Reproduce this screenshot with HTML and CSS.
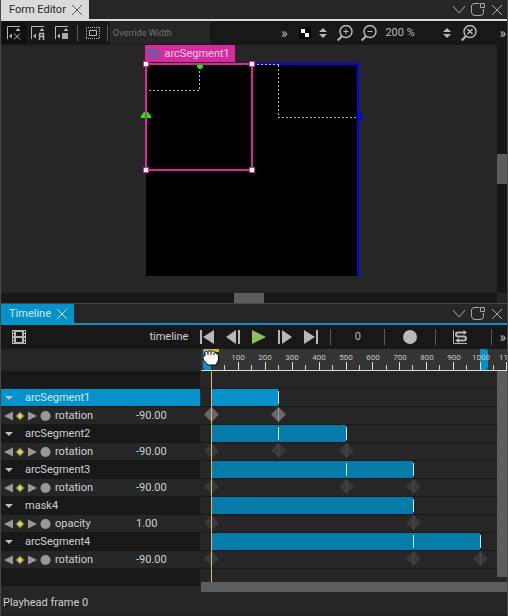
FILE: index.html
```html
<!DOCTYPE html>
<html lang="en">
<head>
<meta charset="utf-8">
<title>Form Editor and Timeline</title>
<link rel="stylesheet" href="styles.css">
</head>
<body>
<svg class="defs" aria-hidden="true">
  <defs>
    <g id="close"><path d="M1 1 11 11M11 1 1 11" fill="none" stroke="currentColor"/></g>
    <g id="chevron"><path d="M1 1 7 8 13 1" fill="none" stroke="currentColor"/></g>
    <g id="float"><path d="M8.500 1.500H4Q.5 1.500 .5 4V10Q.5 13.500 4 13.500H9Q12.500 13.500 12.500 10V7M9.500 1.500h4v4h-4z" fill="none" stroke="currentColor"/></g>
    <g id="spin" fill="currentColor"><path d="M0 4 4 0 8 4zM0 6 4 10 8 6z"/></g>
    <g id="lens" fill="none" stroke="currentColor"><circle cx="9" cy="6.500" r="6" stroke-width="1.500"/><path d="M5 11 .7 15.500" stroke-width="2"/></g>
    <g id="snap"><path d="M.5 13V.5H13" fill="none" stroke="currentColor"/><path d="M8.500 5l2.500-3 2.500 3zM5 7.500v5L2 10z" fill="currentColor"/></g>
    <g id="nav">
      <path d="M0 6 9 1.500v9zM24 1.500 33 6 24 10.500z" fill="#989898"/>
      <path d="M16 1.500 20.500 6 16 10.500 11.500 6z" fill="#777"/><path d="M16 3 19 6 16 9 13 6z" fill="#e0dc2c"/>
      <circle cx="41.500" cy="6" r="5" fill="#989898"/>
    </g>
    <g id="key"><path d="M0-7.500 7.500 0 0 7.500-7.500 0z" fill="#393939"/><path d="M0-7V7" stroke="#484848"/></g>
    <g id="key-on"><path d="M0-7.500 7.500 0 0 7.500-7.500 0z" fill="#696969"/><path d="M0-7V7" stroke="#999"/></g>
  </defs>
</svg>
<main class="app">
  <section class="panel form-editor" aria-label="Form Editor">
    <header class="tabs">
      <div class="tab"><span>Form Editor</span><button aria-label="Close Form Editor"><svg width="12" height="12"><use href="#close"/></svg></button></div>
      <div class="window-actions">
        <button aria-label="Panel menu"><svg width="14" height="10"><use href="#chevron"/></svg></button>
        <button aria-label="Detach panel"><svg width="15" height="15"><use href="#float"/></svg></button>
        <button aria-label="Close panel"><svg width="12" height="12"><use href="#close"/></svg></button>
      </div>
    </header>
    <div class="toolbar sizing">
      <button class="tool selected" aria-label="No snapping"><svg width="14" height="14"><use href="#snap"/><path d="M7 7.500 13 13.500M13 7.500 7 13.500" stroke="currentColor"/></svg></button>
      <button class="tool" aria-label="Snap with anchors"><svg width="14" height="14"><use href="#snap"/><path d="M8.500 14V7.500h4V14M8.500 10.500h4" fill="none" stroke="currentColor" stroke-width="1.500"/></svg></button>
      <button class="tool" aria-label="Snap without anchors"><svg width="14" height="14"><use href="#snap"/><path d="M7 7h6v6H7z" fill="#aaa"/></svg></button>
      <i class="rule"></i>
      <button class="tool bounds" aria-label="Show bounds"><svg width="14" height="12"><path d="M0 .5h14M0 11.500h14M.5 0v12M13.500 0v12" fill="none" stroke="currentColor" stroke-dasharray="1 1"/><path d="M3.500 3.500h7v5h-7z" fill="none" stroke="currentColor"/></svg></button>
      <i class="rule"></i>
      <input class="override" type="text" placeholder="Override Width" aria-label="Override Width">
      <div class="zoom-tools">
        <button class="more" aria-label="More size tools">»</button>
        <button class="checker" aria-label="Canvas background"><svg width="12" height="12"><path d="M0 0h12v12H0z"/><path d="M2 2h4v4h4v4H6V6H2z" fill="#fff"/></svg><svg width="8" height="10"><use href="#spin"/></svg></button>
        <button aria-label="Zoom in"><svg width="16" height="16"><use href="#lens"/><path d="M6.500 6.500h5M9 4v5" stroke="currentColor"/></svg></button>
        <button aria-label="Zoom out"><svg width="16" height="16"><use href="#lens"/><path d="M6.500 6.500h5" stroke="currentColor"/></svg></button>
        <label class="zoom"><select aria-label="Zoom level"><option>200 %</option></select><svg width="8" height="10"><use href="#spin"/></svg></label>
        <button aria-label="Zoom to fit"><svg width="16" height="16"><use href="#lens"/><path d="M6.500 4 11.500 9M11.500 4 6.500 9" stroke="currentColor" stroke-width="1.500"/></svg></button>
        <button class="more" aria-label="More zoom tools">»</button>
      </div>
    </div>
    <div class="workspace">
      <div class="canvas">
        <div class="artboard">
          <div class="item-label"><svg width="13" height="11"><path d="M1 9V1h4l1 2h5v2M1 9.500 3 5h9.500L11 9.500z" fill="none" stroke="#456f9e" stroke-width="1.500"/></svg><span>arcSegment1</span></div>
          <svg width="224" height="216" role="img" aria-label="Selected arc segment on canvas">
            <path d="M6 2h212v212H6z"/>
            <path d="M112 2h106v213" fill="none" stroke="#00f" stroke-width="2"/>
            <path d="M9 28.500h50M59.500 5v24M113 2.500h26M138.500 3v53M138 55.500h79" fill="none" stroke="#bbb" stroke-dasharray="2 2"/>
            <path d="M1 56v-2l3-4h4l3 4v2zM57 3h6v2l-2 2h-2l-2-2z" fill="#0f0"/><path d="M218 50h1l4 5-4 5h-1z" fill="#00f"/>
            <path d="M6 2h106v106H6z" fill="none" stroke="#d8299d" stroke-width="2"/>
            <path d="M3.500-.5h5v5h-5zM109.500-.5h5v5h-5zM3.500 105.500h5v5h-5zM109.500 105.500h5v5h-5z" fill="#fff" stroke="#d8299d"/>
          </svg>
        </div>
      </div>
      <div class="scroll-y"><i></i></div>
      <div class="scroll-x"><i></i></div>
      <div class="corner"></div>
    </div>
  </section>
  <section class="panel timeline" aria-label="Timeline">
    <header class="tabs">
      <div class="tab"><span>Timeline</span><button aria-label="Close Timeline"><svg width="12" height="12"><use href="#close"/></svg></button></div>
      <div class="window-actions">
        <button aria-label="Panel menu"><svg width="14" height="10"><use href="#chevron"/></svg></button>
        <button aria-label="Detach panel"><svg width="15" height="15"><use href="#float"/></svg></button>
        <button aria-label="Close panel"><svg width="12" height="12"><use href="#close"/></svg></button>
      </div>
    </header>
    <div class="toolbar transport">
      <button class="film" aria-label="Timeline settings"><svg width="14" height="14"><path fill-rule="evenodd" d="M0 0h14v14H0zM1 1v2h1V1zM1 4v2h1V4zM1 8v2h1V8zM1 11v2h1v-2zM12 1v2h1V1zM12 4v2h1V4zM12 8v2h1V8zM12 11v2h1v-2zM4 2v4h6V2zM4 8v4h6V8z" fill="currentColor"/></svg></button>
      <span class="name">timeline</span>
      <button aria-label="To start"><svg width="14" height="14"><path d="M0 0h2v14H0zM3 7 14 0v14z" fill="currentColor"/></svg></button>
      <button aria-label="Previous"><svg width="14" height="14"><path d="M12 0h2v14h-2zM0 7 10 0v14z" fill="currentColor"/></svg></button>
      <button class="play" aria-label="Play"><svg width="14" height="14"><path d="M0 0 14 7 0 14z" fill="currentColor"/></svg></button>
      <button aria-label="Next"><svg width="14" height="14"><path d="M0 0h2v14H0zM4 0 14 7 4 14z" fill="currentColor"/></svg></button>
      <button aria-label="To end"><svg width="14" height="14"><path d="M12 0h2v14h-2zM0 0 11 7 0 14z" fill="currentColor"/></svg></button>
      <i class="rule"></i>
      <input class="frame" type="text" value="0" aria-label="Current frame">
      <i class="rule"></i>
      <button class="record" aria-label="Auto key"><svg width="14" height="14"><circle cx="7" cy="7" r="7" fill="currentColor"/></svg></button>
      <i class="rule"></i>
      <button class="curve" aria-label="Easing curve editor"><svg width="14" height="14"><path d="M.5 0v13.500H14" fill="none" stroke="currentColor"/><path d="M11 2.500H5Q3 2.500 3 4.500T5 6.500H11Q13 6.500 13 8.500T11 10.500H5" fill="none" stroke="currentColor" stroke-width="2"/><path d="M10.500 0l3.500 2.500-3.500 2.500zM6 8l-4 2.500 4 2.500z" fill="currentColor"/></svg></button>
      <i class="rule"></i>
      <button class="more" aria-label="More timeline tools">»</button>
    </div>
    <div class="time-grid">
      <div class="ruler-head"></div>
      <div class="ruler">
        <svg width="100%" height="22" role="img" aria-label="Time ruler">
          <path d="M2 0h8v21H5Q2 21 2 18zM279 0h5q3 0 3 3v15q0 3-3 3h-5z" fill="#0492cb"/>
          <path d="M23.500 16v5M50.500 16v5M77.500 16v5M104.500 16v5M131.500 16v5M158.500 16v5M185.500 16v5M211.500 16v5M238.500 16v5M265.500 16v5M292.500 16v5" stroke="#ccc"/>
          <path d="M37.500 13v8M64.500 13v8M91.500 13v8M118.500 13v8M145.500 13v8M171.500 13v8M198.500 13v8M225.500 13v8M252.500 13v8M279.500 13v8M305.500 13v8" stroke="#ddd"/>
          <path d="M0 21.500H310" stroke="#ddd"/>
          <g class="times"><text x="37" y="11">100</text><text x="64" y="11">200</text><text x="91" y="11">300</text><text x="118" y="11">400</text><text x="145" y="11">500</text><text x="172" y="11">600</text><text x="199" y="11">700</text><text x="226" y="11">800</text><text x="253" y="11">900</text><text x="280" y="11">1000</text><text x="307" y="11">1100</text></g>
        </svg>
      </div>
      <div class="rows">
        <div class="row blank"><div class="cell"></div><div class="track"></div></div>
        <div class="row item active"><div class="cell"><i class="caret"></i><span>arcSegment1</span></div><svg class="track"><path d="M10 0h67v17H10z" fill="#0492cb"/><path d="M77.500 2v13" stroke="#ddd"/></svg></div>
        <div class="row prop"><div class="cell"><svg width="47" height="12"><use href="#nav"/></svg><span>rotation</span><output>-90.00</output></div><svg class="track"><use href="#key-on" x="10.500" y="7.500"/><use href="#key-on" x="77.500" y="7.500"/></svg></div>
        <div class="row item"><div class="cell"><i class="caret"></i><span>arcSegment2</span></div><svg class="track"><path d="M10 0h135v17H10z" fill="#067cab"/><path d="M77.500 2v13M145.500 2v13" stroke="#ddd"/></svg></div>
        <div class="row prop"><div class="cell"><svg width="47" height="12"><use href="#nav"/></svg><span>rotation</span><output>-90.00</output></div><svg class="track"><use href="#key" x="10.500" y="7.500"/><use href="#key" x="77.500" y="7.500"/><use href="#key" x="145.500" y="7.500"/></svg></div>
        <div class="row item"><div class="cell"><i class="caret"></i><span>arcSegment3</span></div><svg class="track"><path d="M10 0h202v17H10z" fill="#067cab"/><path d="M145.500 2v13M212.500 2v13" stroke="#ddd"/></svg></div>
        <div class="row prop"><div class="cell"><svg width="47" height="12"><use href="#nav"/></svg><span>rotation</span><output>-90.00</output></div><svg class="track"><use href="#key" x="10.500" y="7.500"/><use href="#key" x="145.500" y="7.500"/><use href="#key" x="212.500" y="7.500"/></svg></div>
        <div class="row item"><div class="cell"><i class="caret"></i><span>mask4</span></div><svg class="track"><path d="M10 0h202v17H10z" fill="#067cab"/><path d="M212.500 2v13" stroke="#ddd"/></svg></div>
        <div class="row prop"><div class="cell"><svg width="47" height="12"><use href="#nav"/></svg><span>opacity</span><output>1.00</output></div><svg class="track"><use href="#key" x="10.500" y="7.500"/><use href="#key" x="212.500" y="7.500"/></svg></div>
        <div class="row item"><div class="cell"><i class="caret"></i><span>arcSegment4</span></div><svg class="track"><path d="M10 0h269v17H10z" fill="#067cab"/><path d="M212.500 2v13M279.500 2v13" stroke="#ddd"/></svg></div>
        <div class="row prop"><div class="cell"><svg width="47" height="12"><use href="#nav"/></svg><span>rotation</span><output>-90.00</output></div><svg class="track"><use href="#key" x="10.500" y="7.500"/><use href="#key" x="212.500" y="7.500"/><use href="#key" x="279.500" y="7.500"/></svg></div>
        <div class="row rest"><div class="cell"></div><div class="track"></div></div>
      </div>
      <div class="time-scroll"></div>
      <div class="playhead"></div>
      <svg class="hand" width="18" height="18" aria-hidden="true"><path d="M2 0h15v3H2z" fill="#d0be20"/><path d="M3 3.500Q4 1 5.500 3 7 .5 8.500 2.500 10.500 .5 11.500 3 13.500 2 14 4.500 16.500 4 16.500 7V11L14 16H6L1.500 11Q0 8 2 6.500L3 7z" fill="#fff" stroke="#000"/><path d="M6 3v3M9 3v3M12 4v2" stroke="#000"/></svg>
    </div>
    <div class="time-scroll-x"><span></span><i></i></div>
    <footer class="status">Playhead frame 0</footer>
  </section>
</main>
</body>
</html>
```
FILE: styles.css
```css
* { box-sizing: border-box; }
body { margin: 0; background: #262626; color: #d0d0d0; font: 11px/16px Roboto, "Noto Sans", sans-serif; }
button, input, select { margin: 0; padding: 0; border: 0; background: none; color: inherit; font: inherit; }
svg { display: block; flex: none; }
button { display: flex; align-items: center; flex: none; }
.defs { position: absolute; width: 0; height: 0; }
.app { display: flex; flex-direction: column; min-height: 100vh; border: 1px solid #484848; border-width: 0 1px; }
.panel { display: flex; flex-direction: column; }
.form-editor { flex: 1; }
.tabs { display: flex; justify-content: space-between; height: 21px; border-bottom: 2px solid #dadada; }
.tab { display: flex; align-items: center; gap: 5px; padding: 0 6px 0 8px; background: #dadada; color: #262626; }
.tab button { color: #555; }
.window-actions { display: flex; align-items: center; gap: 5px; padding-right: 4px; color: #aaa; }
.toolbar { display: flex; align-items: center; height: 24px; background: #181818; color: #b8b8b8; }
.sizing { padding-left: 1px; }
.tool { justify-content: center; width: 24px; height: 22px; }
.tool.selected { background: #101010; }
.tool.bounds { width: 29px; }
.rule { flex: none; width: 1px; height: 16px; background: #5a5a5a; }
.tool + .rule { margin-left: 3px; }
.tool.bounds + .rule { margin-left: 0; }
.override { width: 100px; height: 22px; margin-left: 2px; padding: 0 3px; background: #262626; font-size: 9px; }
.override::placeholder { color: #727272; opacity: 1; }
.more { font-size: 14px; }
.zoom-tools { display: flex; align-items: center; gap: 8px; margin-left: auto; padding-right: 1px; }
.more + .checker { margin-left: 4px; }
.checker { gap: 8px; margin-right: 2px; }
.zoom { display: flex; align-items: center; }
.zoom select { width: 58px; appearance: none; }
.zoom + button { margin: 0 14px 0 2px; }
.workspace { flex: 1; display: grid; grid-template: 1fr 10px / 1fr 10px; }
.canvas { display: flex; justify-content: center; align-items: flex-start; padding: 17px 0 14px 5px; }
.artboard { position: relative; }
.artboard > svg { overflow: visible; }
.item-label { position: absolute; left: 5px; bottom: 100%; display: flex; align-items: center; gap: 4px; height: 17px; padding: 0 5px 0 3px; background: #d8299d; color: #ead3e2; }
.scroll-y, .scroll-x { display: flex; justify-content: center; align-items: center; background: #181818; }
.scroll-y i { width: 10px; height: 30px; background: #5c5d5e; }
.scroll-x i { width: 30px; height: 10px; background: #5c5d5e; }
.timeline { border-top: 1px solid #484848; border-bottom: 2px solid #202020; }
.timeline .tabs { border-color: #0492cb; }
.timeline .tab { background: #0492cb; color: #d8e8f0; }
.timeline .tab button { color: #d8e8f0; }
.transport { justify-content: flex-end; padding-right: 1px; gap: 12px; }
.film { margin: 0 auto 0 11px; }
.name { color: #d0d0d0; }
.play { color: #8fbe5d; }
.frame { width: 29px; text-align: center; }
.record { margin: 0 6px; }
.curve { margin: 0 12px 0 5px; }
.transport .more { margin-left: -5px; }
.time-grid { position: relative; display: grid; grid-template-columns: 200px minmax(0, 1fr) 10px; }
.ruler-head { background: #262626; }
.ruler { grid-column: 2 / 4; background: #343434; }
.times { font-size: 8px; fill: #c8c8c8; text-anchor: middle; }
.rows { grid-column: 1 / 3; min-width: 0; }
.row { display: grid; grid-template-columns: 200px minmax(0, 1fr); height: 18px; border-bottom: 1px solid #181818; }
.row.rest { height: 13px; border: 0; }
.cell { display: flex; align-items: center; margin-right: 1px; background: #181818; }
.prop .cell { padding-left: 3px; background: #262626; }
.prop .cell span { width: 81px; margin-left: 4px; }
.track { width: 100%; height: 17px; }
.item .cell { padding-left: 4px; }
.caret { margin-right: 12px; border: 4px solid transparent; border-top-color: #c0c0c0; border-bottom: 0; }
.active .cell { background: #0492cb; color: #d4e8f2; }
.time-scroll { margin-bottom: 5px; background: #5c5d5e; }
.playhead { position: absolute; left: 210px; top: 21px; bottom: 0; width: 1px; background: #d2bd73; }
.hand { position: absolute; left: 201px; top: 0; }
.time-scroll-x { display: grid; grid-template-columns: 200px 1fr; height: 10px; }
.time-scroll-x i { background: #5c5d5e; }
.status { height: 22px; padding: 3px 2px; }
```
